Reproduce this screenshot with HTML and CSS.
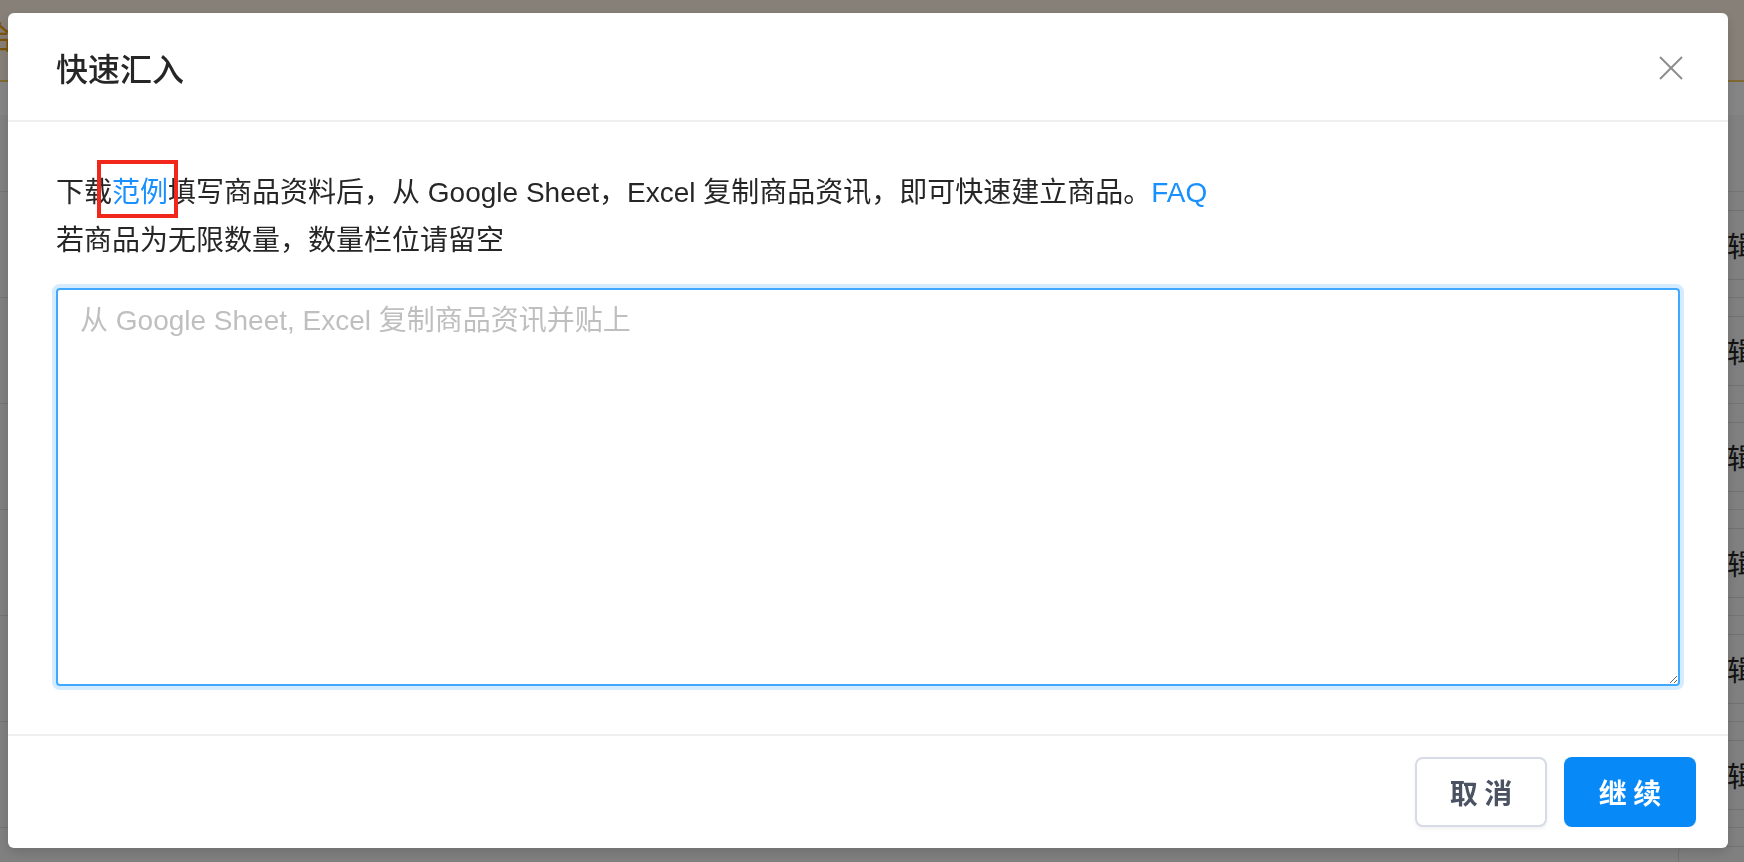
FILE: index.html
```html
<html>
<head>
<meta charset="utf-8">
<meta name="viewport" content="width=device-width, initial-scale=1">
<link rel="stylesheet" href="styles.css">
</head>
<body>
<div class="page">
  <div class="topbar"><span class="logo">合</span></div>
  <div class="toolbar"></div>
  <div class="table">
    <div class="thead"></div>
    <div class="row"><span class="edit">编辑</span></div>
    <div class="row"><span class="edit">编辑</span></div>
    <div class="row"><span class="edit">编辑</span></div>
    <div class="row"><span class="edit">编辑</span></div>
    <div class="row"><span class="edit">编辑</span></div>
    <div class="row"><span class="edit">编辑</span></div>
    <div class="row"><span class="edit">编辑</span></div>
  </div>
</div>

<div class="mask">
  <div class="modal">
    <div class="modal-header">
      <div class="modal-title">快速汇入</div>
      <svg class="close" width="26" height="26" viewBox="0 0 26 26">
        <line x1="2" y1="2" x2="24" y2="24" stroke="#8c8c8c" stroke-width="2" />
        <line x1="24" y1="2" x2="2" y2="24" stroke="#8c8c8c" stroke-width="2" />
      </svg>
    </div>
    <div class="modal-body">
      <p class="intro">下载<span class="mark"><a class="link">范例</a></span>填写商品资料后，从 Google Sheet，Excel 复制商品资讯，即可快速建立商品。<a class="link">FAQ</a><br>若商品为无限数量，数量栏位请留空</p>
      <textarea class="paste" placeholder="从 Google Sheet, Excel 复制商品资讯并贴上" autofocus></textarea>
    </div>
    <div class="modal-footer">
      <button class="btn btn-cancel">取 消</button>
      <button class="btn btn-ok">继 续</button>
    </div>
  </div>
</div>
</body>
</html>
```

FILE: styles.css
```css
body {
  margin: 0;
  overflow: hidden;
  font-family: "Liberation Sans", "Noto Sans CJK SC", sans-serif;
}

/* page behind the modal */
.page {
  width: 1790px;
  height: 862px;
  overflow: hidden;
}
.topbar {
  height: 80px;
  background: #f5e9da;
  border-bottom: 2px solid #e9bf5a;
  overflow: hidden;
}
.logo {
  display: inline-block;
  margin-left: -17px;
  margin-top: 12px;
  font-size: 32px;
  color: #e39a14;
}
.toolbar {
  height: 33px;
  background: #f3f3f4;
}
.thead {
  height: 76px;
  background: #ebebec;
  border-bottom: 1px solid #d4d4d4;
}
.row {
  height: 105px;
  background: #e9e9e9;
  border-bottom: 1px solid #d4d4d4;
  display: flex;
  align-items: center;
  justify-content: flex-end;
  padding-right: 14px;
}
.edit {
  display: flex;
  align-items: center;
  height: 68px;
  padding: 0 20px;
  border: 1px solid #cfcfcf;
  border-radius: 6px;
  font-size: 28px;
  color: #222;
  font-family: "Noto Sans CJK SC", sans-serif;
}

/* modal */
.mask {
  position: fixed;
  left: 0;
  top: 0;
  right: 0;
  bottom: 0;
  background: rgba(0, 0, 0, 0.45);
  padding: 13px 0 0 8px;
}
.modal {
  width: 1720px;
  background: #fff;
  border-radius: 6px;
  box-shadow: 0 4px 12px rgba(0, 0, 0, 0.15);
  display: flex;
  flex-direction: column;
}
.modal-header {
  height: 107px;
  border-bottom: 2px solid #efefef;
  display: flex;
  align-items: center;
  justify-content: space-between;
  padding: 0 44px 0 48px;
}
.modal-title {
  font-size: 32px;
  font-weight: 500;
  color: #262626;
  font-family: "Noto Sans CJK SC", sans-serif;
}
.close {
  margin-top: 2px;
}
.modal-body {
  padding: 47px 48px 48px 48px;
}
.intro {
  margin: 0 0 23px 0;
  font-size: 28px;
  line-height: 48px;
  color: #262626;
}
.link {
  color: #1890ff;
}
.mark {
  position: relative;
}
.mark::after {
  content: "";
  position: absolute;
  left: -15px;
  right: -10px;
  top: -17px;
  bottom: -10px;
  border: 4px solid #f0271a;
}
.paste {
  display: block;
  width: 100%;
  height: 398px;
  box-sizing: border-box;
  margin: 0;
  padding: 13px 22px 11px 22px;
  border: 2px solid #40a9ff;
  border-radius: 4px;
  box-shadow: 0 0 0 4px rgba(24, 144, 255, 0.18);
  outline: none;
  caret-color: #262626;
  font-family: "Liberation Sans", "Noto Sans CJK SC", sans-serif;
  font-size: 28px;
  line-height: 36px;
  color: #262626;
}
.paste::placeholder {
  color: #bfbfbf;
}
.modal-footer {
  border-top: 2px solid #efefef;
  padding: 21px 32px 21px 0;
  display: flex;
  justify-content: flex-end;
  gap: 17px;
}
.btn {
  width: 132px;
  height: 70px;
  border-radius: 8px;
  font-family: "Noto Sans CJK SC", sans-serif;
  font-size: 28px;
  font-weight: 700;
  cursor: pointer;
}
.btn-cancel {
  background: #fff;
  border: 2px solid #d7dbe7;
  color: #4b5262;
  box-shadow: 0 2px 4px rgba(0, 0, 0, 0.06);
}
.btn-ok {
  background: #0789f8;
  border: none;
  color: #fff;
}
```
